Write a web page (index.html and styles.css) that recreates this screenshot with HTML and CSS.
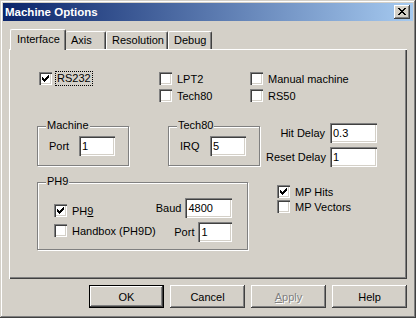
FILE: index.html
```html
<!DOCTYPE html>
<html lang="en">
<head>
    <meta charset="UTF-8">
    <title>Machine Options</title>
    <link rel="stylesheet" href="styles.css">
</head>
<body>
    <div class="window">
        <!-- Title bar -->
        <div class="titlebar">
            <span class="title">Machine Options</span>
            <span class="close-btn">
                <svg width="16" height="14" viewBox="0 0 16 14">
                    <path fill="#000" d="M4 3h2v1h-2z M10 3h2v1h-2z M5 4h2v1h-2z M9 4h2v1h-2z M6 5h4v1h-4z M7 6h2v1h-2z M6 7h4v1h-4z M5 8h2v1h-2z M9 8h2v1h-2z M4 9h2v1h-2z M10 9h2v1h-2z"/>
                </svg>
            </span>
        </div>

        <div class="content">
            <!-- Tabs -->
            <div class="tabs">
                <div class="tab active">Interface</div>
                <div class="tab tab-axis">Axis</div>
                <div class="tab tab-res">Resolution</div>
                <div class="tab tab-debug">Debug</div>
            </div>

            <!-- Interface page -->
            <div class="panel">
                <div class="row-top">
                    <div class="col col-a">
                        <div class="check"><span class="box checked"><svg width="13" height="13" viewBox="0 0 13 13"><path fill="#000" d="M3 5h1v3h-1z M4 6h1v3h-1z M5 7h1v3h-1z M6 6h1v3h-1z M7 5h1v3h-1z M8 4h1v3h-1z M9 3h1v3h-1z"/></svg></span><span class="focus">RS232</span></div>
                    </div>
                    <div class="col col-b">
                        <div class="check"><span class="box"></span><span>LPT2</span></div>
                        <div class="check"><span class="box"></span><span>Tech80</span></div>
                    </div>
                    <div class="col">
                        <div class="check"><span class="box"></span><span>Manual machine</span></div>
                        <div class="check"><span class="box"></span><span>RS50</span></div>
                    </div>
                </div>

                <div class="row-mid">
                    <div class="group group-small">
                        <span class="legend">Machine</span>
                        <div class="field"><span class="field-label">Port</span><span class="edit edit-sm">1</span></div>
                    </div>
                    <div class="group group-small group-tech">
                        <span class="legend">Tech80</span>
                        <div class="field"><span class="field-label">IRQ</span><span class="edit edit-sm">5</span></div>
                    </div>
                    <div class="delays">
                        <span class="delay-label">Hit Delay</span><span class="edit edit-md">0.3</span>
                        <span class="delay-label">Reset Delay</span><span class="edit edit-md">1</span>
                    </div>
                </div>

                <div class="row-bot">
                    <div class="group group-ph9">
                        <span class="legend">PH9</span>
                        <div class="ph9-checks">
                            <div class="check"><span class="box checked"><svg width="13" height="13" viewBox="0 0 13 13"><path fill="#000" d="M3 5h1v3h-1z M4 6h1v3h-1z M5 7h1v3h-1z M6 6h1v3h-1z M7 5h1v3h-1z M8 4h1v3h-1z M9 3h1v3h-1z"/></svg></span><span>PH<u>9</u></span></div>
                            <div class="check"><span class="box"></span><span>Handbox (PH9D)</span></div>
                        </div>
                        <div class="ph9-fields">
                            <div class="field field-gap"><span>Baud</span><span class="edit edit-md">4800</span></div>
                            <div class="field field-gap"><span>Port</span><span class="edit edit-port">1</span></div>
                        </div>
                    </div>
                    <div class="col col-mp">
                        <div class="check"><span class="box checked"><svg width="13" height="13" viewBox="0 0 13 13"><path fill="#000" d="M3 5h1v3h-1z M4 6h1v3h-1z M5 7h1v3h-1z M6 6h1v3h-1z M7 5h1v3h-1z M8 4h1v3h-1z M9 3h1v3h-1z"/></svg></span><span>MP Hits</span></div>
                        <div class="check"><span class="box"></span><span>MP Vectors</span></div>
                    </div>
                </div>
            </div>

            <!-- Dialog buttons -->
            <div class="buttons">
                <span class="btn btn-default">OK</span>
                <span class="btn">Cancel</span>
                <span class="btn btn-disabled"><u>A</u>pply</span>
                <span class="btn">Help</span>
            </div>
        </div>
    </div>
</body>
</html>
```

FILE: styles.css
```css
body {
    margin: 0;
    background-color: #d4d0c8;
    font-family: "Liberation Sans", Arial, sans-serif;
    font-size: 11px;
    color: #000;
}

/* Classic window frame */
.window {
    width: 416px;
    height: 318px;
    box-sizing: border-box;
    padding: 3px;
    background-color: #d4d0c8;
    box-shadow: inset -1px -1px #404040, inset 1px 1px #d4d0c8, inset -2px -2px #808080, inset 2px 2px #fff;
}

.titlebar {
    height: 18px;
    display: flex;
    align-items: center;
    justify-content: space-between;
    padding: 0 3px 0 2px;
    background: linear-gradient(to right, #0a246a, #a6caf0);
}

.title {
    color: #fff;
    font-weight: bold;
    font-size: 11.5px;
}

.close-btn {
    width: 16px;
    height: 14px;
    display: flex;
    background-color: #d4d0c8;
    box-shadow: inset -1px -1px #404040, inset 1px 1px #fff, inset -2px -2px #808080;
}

.content {
    padding: 8px 6px 0;
}

/* Tabs */
.tabs {
    display: flex;
    align-items: flex-end;
    height: 20px;
    padding-left: 1px;
}

.tab {
    height: 18px;
    box-sizing: border-box;
    line-height: 17px;
    border-top: 1px solid #fff;
    border-left: 1px solid #fff;
    border-right: 1px solid #404040;
    border-radius: 2px 2px 0 0;
    box-shadow: inset -1px 0 #808080;
    padding-left: 4px;
    background-color: #d4d0c8;
}

.tab.active {
    position: relative;
    z-index: 1;
    width: 56px;
    height: 21px;
    line-height: 18px;
    margin-bottom: -1px;
    padding-left: 6px;
}

.tab-axis {
    width: 40px;
    border-left: none;
    padding-left: 5px;
}

.tab-res {
    width: 62px;
    padding-left: 5px;
}

.tab-debug {
    width: 44px;
    padding-left: 5px;
}

/* Tab page */
.panel {
    height: 230px;
    box-sizing: border-box;
    padding: 23px 0 0 28px;
    box-shadow: inset 1px 1px #fff, inset -1px -1px #404040, inset -2px -2px #808080;
}

.row-top {
    display: flex;
    padding-left: 2px;
}

.col {
    display: flex;
    flex-direction: column;
    gap: 4px;
}

.col-a {
    width: 120px;
}

.col-b {
    width: 91px;
}

.check {
    display: flex;
    align-items: center;
    gap: 5px;
    height: 13px;
    white-space: nowrap;
}

.box {
    width: 13px;
    height: 13px;
    flex: none;
    box-sizing: border-box;
    background-color: #fff;
    box-shadow: inset 1px 1px #808080, inset 2px 2px #404040, inset -1px -1px #fff, inset -2px -2px #d4d0c8;
}

.box svg {
    display: block;
}

.focus {
    outline: 1px dotted #000;
    padding: 0 1px;
    margin-left: -1px;
    line-height: 13px;
}

.row-mid {
    display: flex;
    align-items: flex-start;
    height: 43px;
    margin-top: 21px;
}

/* Group boxes */
.group {
    position: relative;
    box-sizing: border-box;
    border: 1px solid #808080;
    box-shadow: 1px 1px #fff, inset 1px 1px #fff;
}

.legend {
    position: absolute;
    top: -8px;
    left: 8px;
    padding: 0 1px;
    line-height: 13px;
    background-color: #d4d0c8;
}

.group-small {
    width: 92px;
    height: 40px;
    margin-top: 3px;
    padding: 9px 0 0 11px;
}

.group-tech {
    margin-left: 39px;
}

.field {
    display: flex;
    align-items: center;
}

.field-label {
    width: 30px;
}

.field-gap {
    gap: 4px;
}

.edit {
    height: 20px;
    box-sizing: border-box;
    display: flex;
    align-items: center;
    padding-left: 3px;
    background-color: #fff;
    box-shadow: inset 1px 1px #808080, inset 2px 2px #404040, inset -1px -1px #fff, inset -2px -2px #d4d0c8;
}

.edit-sm {
    width: 36px;
}

.edit-md {
    width: 47px;
}

.edit-port {
    width: 34px;
}

.delays {
    display: grid;
    grid-template-columns: 59px 47px;
    column-gap: 5px;
    row-gap: 4px;
    align-items: center;
    margin-left: 6px;
    white-space: nowrap;
}

.delay-label {
    text-align: right;
}

.row-bot {
    display: flex;
    align-items: flex-start;
    margin-top: 16px;
}

.group-ph9 {
    width: 211px;
    height: 68px;
    display: flex;
    justify-content: space-between;
    padding: 15px 16px 0 16px;
}

.ph9-checks {
    display: flex;
    flex-direction: column;
    gap: 7px;
    margin-top: 6px;
}

.ph9-fields {
    display: flex;
    flex-direction: column;
    align-items: flex-end;
    gap: 4px;
}

.col-mp {
    margin: 3px 0 0 29px;
    gap: 2px;
}

/* Bottom buttons */
.buttons {
    display: flex;
    justify-content: flex-end;
    gap: 6px;
    margin-top: 6px;
}

.btn {
    width: 75px;
    height: 23px;
    box-sizing: border-box;
    display: flex;
    align-items: center;
    justify-content: center;
    background-color: #d4d0c8;
    box-shadow: inset -1px -1px #404040, inset 1px 1px #fff, inset -2px -2px #808080, inset 2px 2px #d4d0c8;
}

.btn-default {
    border: 1px solid #000;
}

.btn-disabled {
    color: #808080;
    text-shadow: 1px 1px #fff;
}
```
